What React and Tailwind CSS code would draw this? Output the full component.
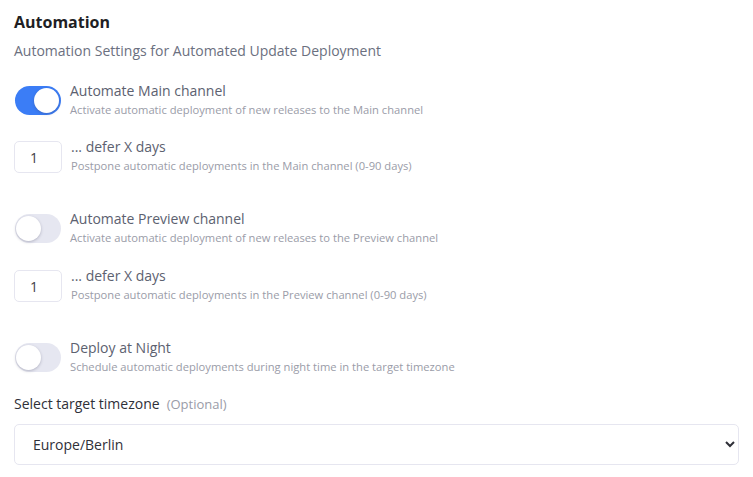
import { useState } from "react";

function Toggle({ checked, onChange }) {
  return (
    <button
      type="button"
      onClick={() => onChange(!checked)}
      className={`relative mt-[1px] h-[29px] w-[46px] shrink-0 rounded-full ${
        checked ? "bg-[#3b7df6]" : "bg-[#e6e7f1]"
      }`}
    >
      <span
        className={`absolute top-[2px] h-[25px] w-[25px] rounded-full bg-white shadow-[0_1px_3px_rgba(60,60,90,0.3)] ${
          checked ? "left-[19px]" : "left-[1px]"
        }`}
      />
    </button>
  );
}

function Row({ control, title, description }) {
  return (
    <div className="flex items-start gap-[9px]">
      {control}
      <div className="-mt-[4px]">
        <div className="text-[14px] leading-[20px] text-[#5c6170]">{title}</div>
        <div className="mt-[1px] text-[11.2px] leading-[16px] text-[#9a9ca8]">{description}</div>
      </div>
    </div>
  );
}

function DaysInput({ value, onChange }) {
  return (
    <input
      type="text"
      value={value}
      onChange={(event) => onChange(event.target.value)}
      className="h-[32px] w-[48px] shrink-0 rounded-[5px] border border-[#e6e6f0] bg-white px-[15px] text-[14px] text-[#3f3f46] outline-none"
    />
  );
}

export default function App() {
  const [mainOn, setMainOn] = useState(true);
  const [previewOn, setPreviewOn] = useState(false);
  const [nightOn, setNightOn] = useState(false);
  const [mainDays, setMainDays] = useState("1");
  const [previewDays, setPreviewDays] = useState("1");
  const [timezone, setTimezone] = useState("Europe/Berlin");

  return (
    <div
      className="min-h-screen bg-white px-[14px] pt-[11px]"
      style={{ fontFamily: "'Open Sans', sans-serif" }}
    >
      <h2 className="text-[16px] font-bold leading-[22px] text-[#1f1f24]">Automation</h2>
      <p className="mt-[8px] text-[14px] leading-[20px] text-[#6b7080]">
        Automation Settings for Automated Update Deployment
      </p>

      <div className="mt-[24px] pl-[1px]">
        <Row
          control={<Toggle checked={mainOn} onChange={setMainOn} />}
          title="Automate Main channel"
          description="Activate automatic deployment of new releases to the Main channel"
        />
      </div>

      <div className="mt-[23px]">
        <Row
          control={<DaysInput value={mainDays} onChange={setMainDays} />}
          title="... defer X days"
          description="Postpone automatic deployments in the Main channel (0-90 days)"
        />
      </div>

      <div className="mt-[39px] pl-[1px]">
        <Row
          control={<Toggle checked={previewOn} onChange={setPreviewOn} />}
          title="Automate Preview channel"
          description="Activate automatic deployment of new releases to the Preview channel"
        />
      </div>

      <div className="mt-[24px]">
        <Row
          control={<DaysInput value={previewDays} onChange={setPreviewDays} />}
          title="... defer X days"
          description="Postpone automatic deployments in the Preview channel (0-90 days)"
        />
      </div>

      <div className="mt-[39px] pl-[1px]">
        <Row
          control={<Toggle checked={nightOn} onChange={setNightOn} />}
          title="Deploy at Night"
          description="Schedule automatic deployments during night time in the target timezone"
        />
      </div>

      <div className="mt-[19px] text-[14px] leading-[20px] text-[#2f3038]">
        Select target timezone
        <span className="ml-[7px] text-[13px] text-[#9a9ca8]">(Optional)</span>
      </div>

      <select
        value={timezone}
        onChange={(event) => setTimezone(event.target.value)}
        className="mt-[10px] h-[41px] w-[725px] rounded-[5px] border border-[#e6e6f0] bg-white pl-[14px] pr-[10px] text-[14px] text-[#2f3038] outline-none"
      >
        <option>Europe/Berlin</option>
        <option>Europe/London</option>
        <option>America/New_York</option>
        <option>UTC</option>
      </select>
    </div>
  );
}
